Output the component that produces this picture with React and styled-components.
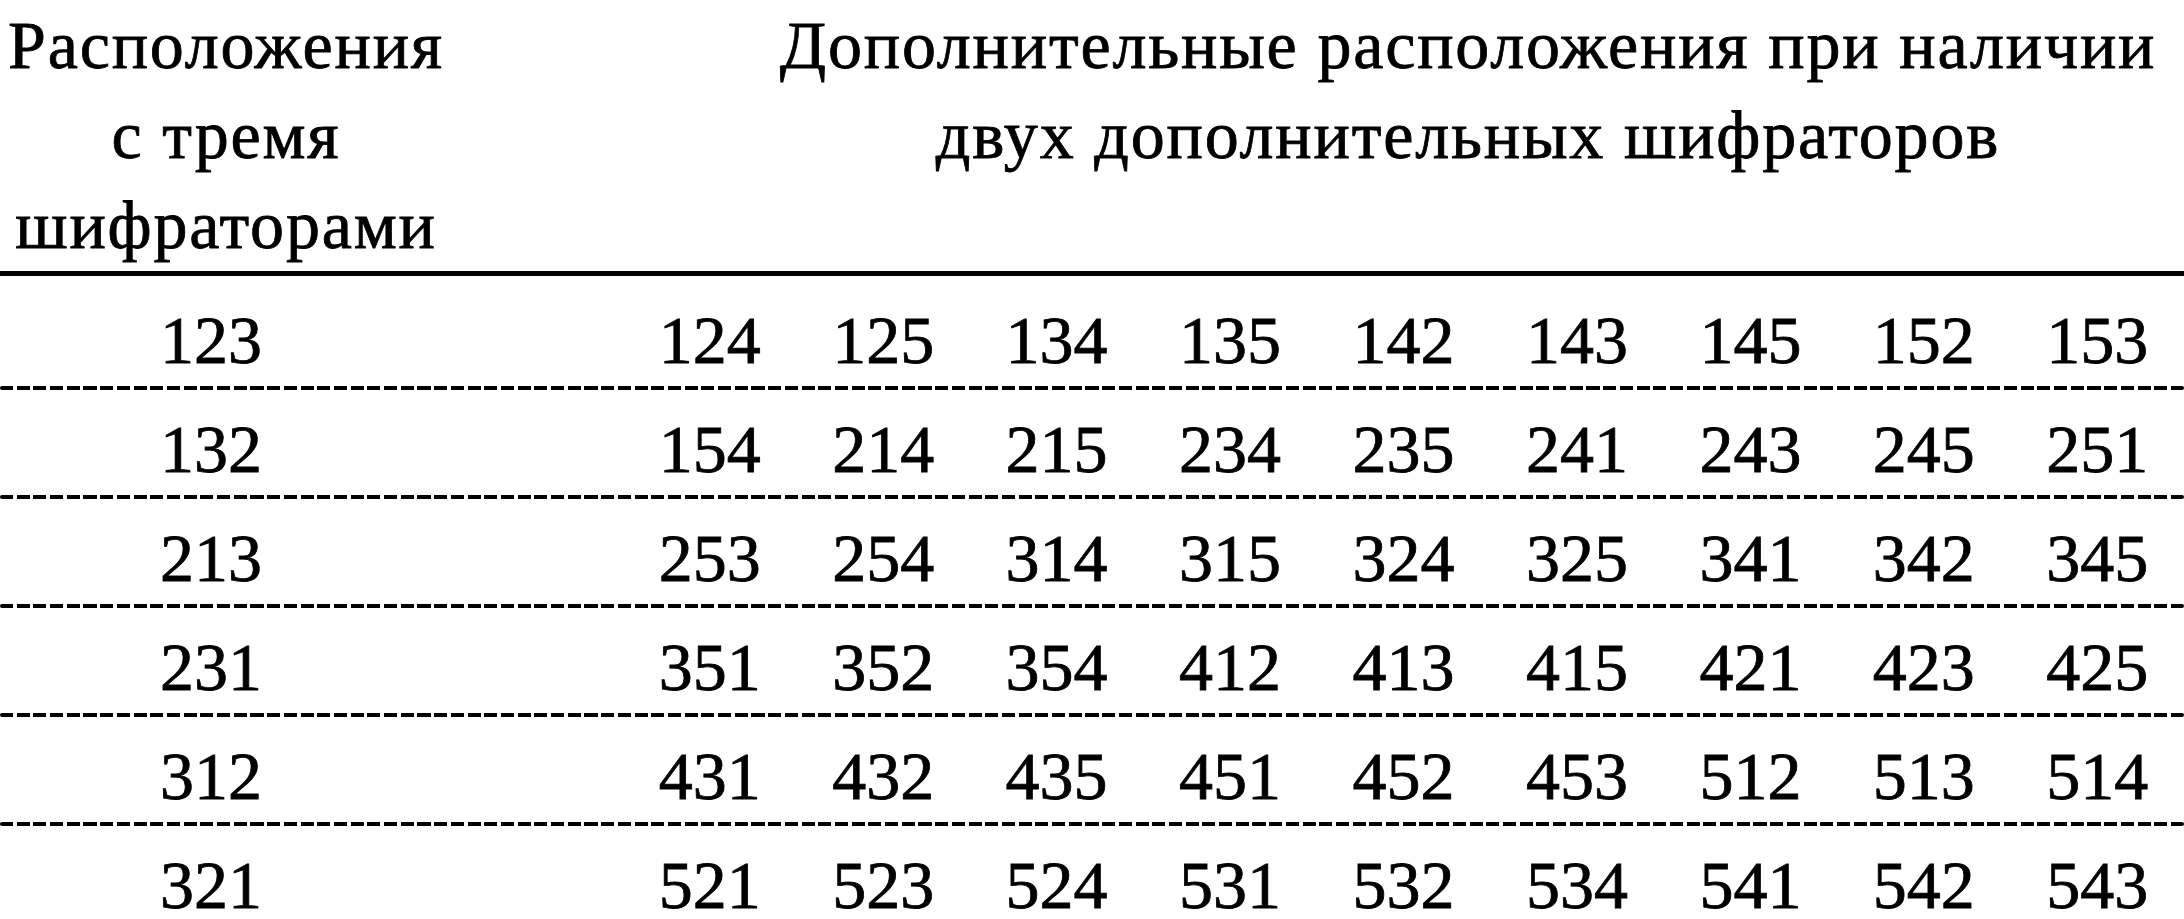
import React from "react";
import styled, { createGlobalStyle } from "styled-components";

const GlobalStyle = createGlobalStyle`
  html, body {
    margin: 0;
    padding: 0;
    background: #ffffff;
  }
  body {
    font-family: "Liberation Serif", "Times New Roman", serif;
    color: #000000;
  }
`;

const Table = styled.div`
  width: 2184px;
  font-family: "Liberation Serif", "Times New Roman", serif;
  font-size: 68px;
  color: #000;
  -webkit-text-stroke: 0.8px #000;
`;

const HeaderRow = styled.div`
  display: flex;
  padding-bottom: 1px;
  border-bottom: 5px solid #000;
`;

const HeaderCell = styled.div`
  width: ${(p) => (p.$width ? `${p.$width}px` : "auto")};
  flex: ${(p) => (p.$width ? "none" : "1")};
  padding-left: ${(p) => p.$indent || 0}px;
  line-height: 90px;
  letter-spacing: 1.8px;
  text-align: center;
  white-space: nowrap;
`;

const Body = styled.div`
  padding-top: 5px;
`;

const Row = styled.div`
  display: flex;
  height: 105px;
  padding-top: 19px;
  box-sizing: border-box;
  line-height: 80px;
`;

const LeadCell = styled.div`
  width: 422px;
  text-align: center;
`;

const Numbers = styled.div`
  flex: 1;
  margin-left: 201px;
  display: grid;
  grid-template-columns: repeat(9, 1fr);
`;

const Num = styled.span`
  text-align: center;
`;

const DashedRule = styled.div`
  height: 4px;
  background: repeating-linear-gradient(
    90deg,
    #000 0,
    #000 13px,
    transparent 13px,
    transparent 16.7px
  );
  border-radius: 2px;
`;

const rows = [
  ["123", ["124", "125", "134", "135", "142", "143", "145", "152", "153"]],
  ["132", ["154", "214", "215", "234", "235", "241", "243", "245", "251"]],
  ["213", ["253", "254", "314", "315", "324", "325", "341", "342", "345"]],
  ["231", ["351", "352", "354", "412", "413", "415", "421", "423", "425"]],
  ["312", ["431", "432", "435", "451", "452", "453", "512", "513", "514"]],
  ["321", ["521", "523", "524", "531", "532", "534", "541", "542", "543"]],
];

export default function App() {
  return (
    <>
      <GlobalStyle />
      <Table>
        <HeaderRow>
          <HeaderCell $width={452}>
            Расположения
            <br />с тремя
            <br />
            шифраторами
          </HeaderCell>
          <HeaderCell $indent={300}>
            Дополнительные расположения при наличии
            <br />
            двух дополнительных шифраторов
          </HeaderCell>
        </HeaderRow>
        <Body>
          {rows.map(([lead, extra], i) => (
            <React.Fragment key={lead}>
              <Row>
                <LeadCell>{lead}</LeadCell>
                <Numbers>
                  {extra.map((n) => (
                    <Num key={n}>{n}</Num>
                  ))}
                </Numbers>
              </Row>
              {i < rows.length - 1 && <DashedRule />}
            </React.Fragment>
          ))}
        </Body>
      </Table>
    </>
  );
}
